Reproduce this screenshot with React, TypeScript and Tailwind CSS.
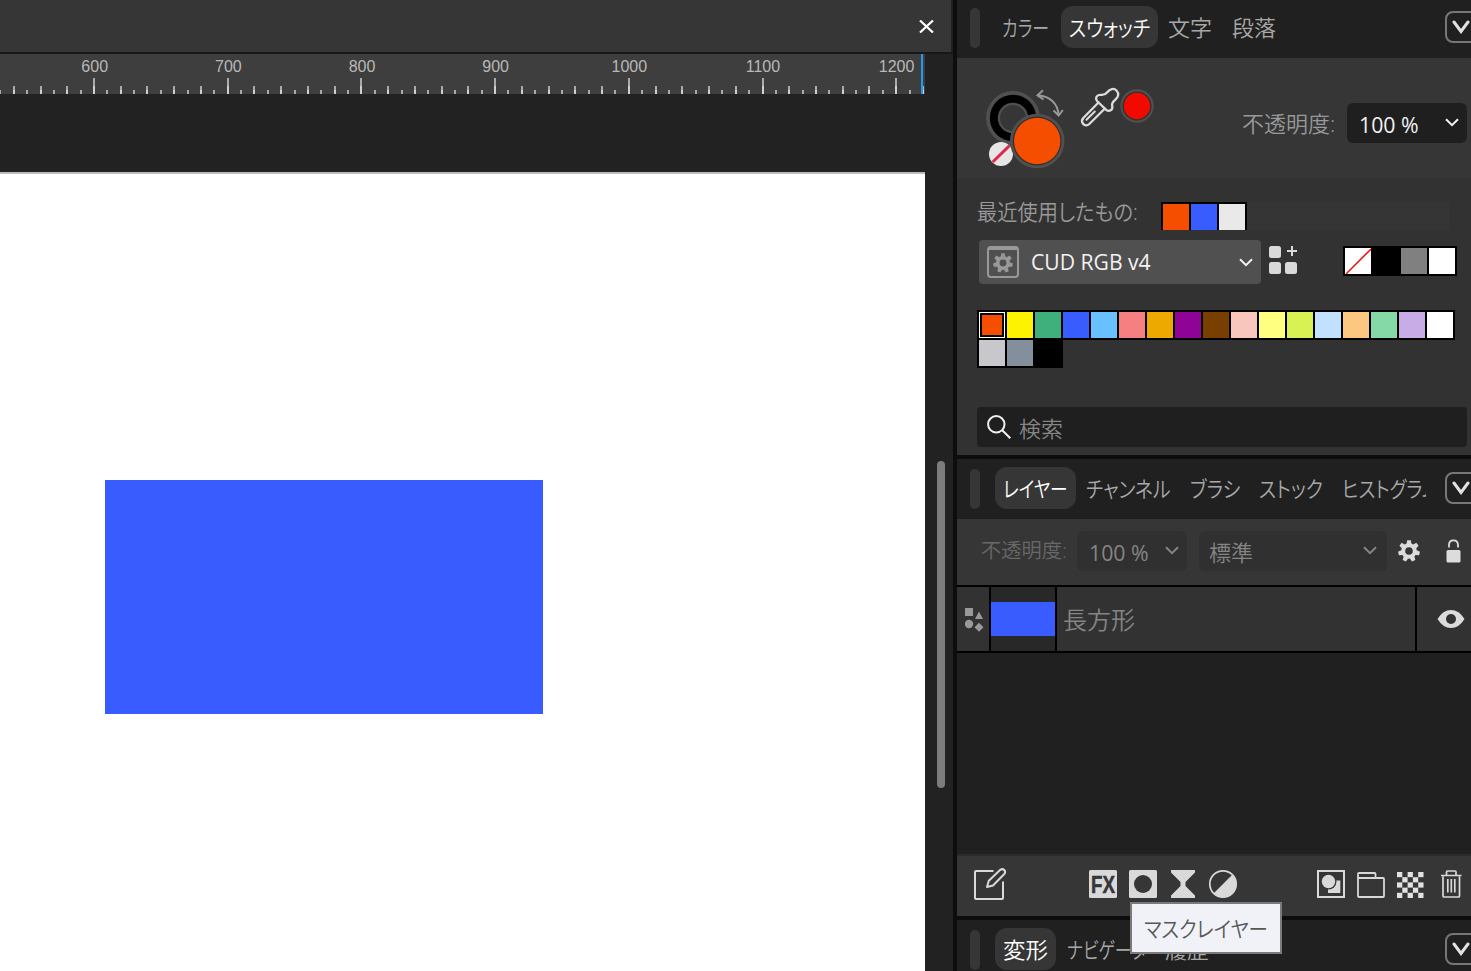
import { useLayoutEffect, useRef, useState } from 'react';
import clsx from 'clsx';

const PALETTE = [
  '#f54e00', '#fdf200', '#3faf7c', '#385cff', '#69c0ff', '#f67f81', '#eea900', '#8f0496', '#793f00', '#f9c6bd',
  '#ffff80', '#d9f253', '#c2e1ff', '#fcc780', '#84d9a7', '#c7ace6', '#ffffff', '#c7c7cc', '#848f9e', '#000000',
];

const RULER_START = 94;
const RULER_STEP = 13.37;

// Squeezes one line of text to the width of its box.
const Fit = ({ children, className }: { children: string; className: string }) => {
  const box = useRef<HTMLSpanElement>(null);
  const text = useRef<HTMLSpanElement>(null);
  const [scale, setScale] = useState(1);

  useLayoutEffect(() => {
    if (box.current && text.current) {
      setScale(box.current.clientWidth / text.current.offsetWidth);
    }
  }, [children]);

  return (
    <span ref={box} className={clsx('block shrink-0 whitespace-nowrap', className)}>
      <span ref={text} className="inline-block origin-left" style={{ transform: `scaleX(${scale})` }}>
        {children}
      </span>
    </span>
  );
};

const Chevron = ({ className }: { className?: string }) => (
  <svg width="14" height="9" viewBox="0 0 14 9" fill="none" stroke="currentColor" strokeWidth="2" className={clsx('shrink-0', className)}>
    <path d="M1 1.2 7 7.2 13 1.2" />
  </svg>
);

const Gear = ({ size, className }: { size: number; className?: string }) => (
  <svg width={size} height={size} viewBox="-11 -11 22 22" fill="none" stroke="currentColor" className={clsx('shrink-0', className)}>
    <circle r="5.8" strokeWidth="4" />
    {[0, 1, 2, 3, 4, 5, 6].map((i) => (
      <path key={i} d="M-2.5-7 -1.8-10.8H1.8L2.5-7z" fill="currentColor" stroke="none" transform={`rotate(${(i * 360) / 7})`} />
    ))}
  </svg>
);

const PanelMenu = ({ className }: { className?: string }) => (
  <div className={clsx('ml-auto h-8 w-[26px] shrink-0 overflow-hidden text-[#e2e2e2]', className)}>
    <div className="flex h-8 w-9 items-center rounded-lg border-2 border-[#777] pl-[5px]">
      <svg width="18" height="14" viewBox="0 0 18 14" fill="none" stroke="currentColor" strokeWidth="3" strokeLinecap="round">
        <path d="M2 2 9 11.5 16 2" />
      </svg>
    </div>
  </div>
);

const Grip = () => <div className="mt-0.5 ml-[13px] h-10 w-2.5 shrink-0 rounded-full bg-[#363636]" />;

const Tab = ({ label, width, active, className }: { label: string; width: string; active?: boolean; className?: string }) => (
  <div
    className={clsx(
      'flex h-[42px] shrink-0 items-center rounded-xl px-2 text-[22px] leading-[42px]',
      active ? 'bg-[#363636] text-white' : 'text-[#a8a8a8]',
      className,
    )}
  >
    <Fit className={width}>{label}</Fit>
  </div>
);

const Swatch = ({ color, selected }: { color: string; selected?: boolean }) => (
  <div className="h-[26px] w-[26px]" style={{ backgroundColor: color }}>
    {selected && (
      <div className="h-full w-full border border-white">
        <div className="h-full w-full border-2 border-black" />
      </div>
    )}
  </div>
);

const Ruler = () => {
  const ticks = [];
  for (let i = -7; i <= 62; i++) {
    const x = Math.round(RULER_START + i * RULER_STEP) - 1;
    const h = i % 10 === 0 ? 16 : i % 2 === 0 ? 8 : 4;
    ticks.push(
      <g key={i}>
        <rect x={x} y={40 - h} width="2" height={h} fill="#ababab" />
        {h > 4 && <rect x={x} y={h === 16 ? 32 : 36} width="2" height={h / 2} fill="#cfcfcf" />}
      </g>,
    );
  }
  return (
    <svg width="925" height="40" className="block bg-[#3e3e3e]">
      {ticks}
      <g fill="#b8b8b8" fontFamily="Liberation Sans" fontSize="16" textAnchor="middle">
        {[600, 700, 800, 900, 1000, 1100, 1200].map((n, i) => (
          <text key={n} x={94.7 + i * 133.65} y="17.5">{n}</text>
        ))}
      </g>
      <rect x="921" y="0" width="2" height="40" fill="#1e9bf5" />
    </svg>
  );
};

const ColorWells = () => (
  <svg width="180" height="90" viewBox="980 84 180 90" fill="none" className="shrink-0">
    <circle cx="1013" cy="118" r="27" fill="#505050" />
    <circle cx="1013" cy="118" r="23.2" fill="#000" />
    <circle cx="1013" cy="118" r="15.2" fill="#505050" />
    <circle cx="1013" cy="118" r="13" fill="#363636" />
    <circle cx="1001" cy="154" r="12" fill="#e6e6e6" />
    <path d="M992.7 162 1009.5 145.7" stroke="#e0284c" strokeWidth="3" />
    <circle cx="1037.2" cy="141" r="27.3" fill="#505050" />
    <circle cx="1037.2" cy="141" r="24.4" fill="#2e2e2e" />
    <circle cx="1037.2" cy="141" r="23.2" fill="#f54e00" />
    <g stroke="#999" strokeWidth="2">
      <path d="M1038 95.3C1050 96.5 1058 103.5 1058.5 115" />
      <path d="M1043 90.3 1037.5 95.3 1043.5 99.5M1053.5 110.5 1058.7 115.5 1062.8 110" />
    </g>
    <g stroke="#dcdcdc" strokeWidth="2.3" strokeLinejoin="round" strokeLinecap="round">
      <path d="M1098.5 102.5 1083.3 118C1081.5 120 1081.7 122 1083 123.8 1084.8 125.8 1087.5 125.7 1089.3 124L1104.7 108.7" />
      <path d="M1097 101C1095 98.5 1096.5 94.5 1100.5 94.8 1104 95.3 1105.5 94.5 1107 92.5 1110 88.5 1114 88 1116.5 90.5 1119.3 93.5 1118.5 97.2 1115 100 1112.3 102 1111.5 103.5 1112.3 106.7 1112.8 110 1109.5 111.8 1106.5 110.2z" />
      <path d="M1086.500 119.8 1094.8 111.5" strokeWidth="2" />
    </g>
    <circle cx="1137" cy="106" r="16.7" fill="#505050" />
    <circle cx="1137" cy="106" r="14.5" fill="#303030" />
    <circle cx="1137" cy="106" r="13.2" fill="#f20a00" />
  </svg>
);

const LayerToolbar = () => (
  <svg width="514" height="60" viewBox="957 856 514 60" fill="none" className="block">
    <g stroke="#d9d9d9" strokeWidth="2">
      <path d="M993.5 871H976Q975 871 975 872V898Q975 899 976 899H1002Q1003 899 1003 898V881.5" />
      <path d="M987 887 988.8 880.8 1000.3 869.8Q1002.5 868.3 1004.3 870 1006 872 1004.3 874L993 885.5z" strokeLinejoin="round" />
    </g>
    <rect x="1089" y="870" width="28" height="28" rx="1.5" fill="#d9d9d9" />
    <text x="1091" y="892.5" textLength="24" lengthAdjust="spacingAndGlyphs" fontFamily="Liberation Sans" fontWeight="bold" fontSize="24" fill="#363636" stroke="#363636" strokeWidth=".5">FX</text>
    <rect x="1129" y="870" width="28" height="28" rx="1.5" fill="#d9d9d9" />
    <circle cx="1143" cy="884" r="9" fill="#363636" />
    <path d="M1171 870H1195V872.5L1185.5 882V886L1195 895.5V898H1171V895.5L1180.5 886V882L1171 872.5z" fill="#d9d9d9" />
    <circle cx="1223" cy="884" r="13.2" stroke="#d9d9d9" strokeWidth="1.7" />
    <path d="M1232.5 874.5A13.4 13.4 0 0 1 1213.5 893.5z" fill="#d9d9d9" />
    <rect x="1318" y="871" width="26" height="26" stroke="#d9d9d9" strokeWidth="2" />
    <path d="M1328 885V893H1340.3V880.5H1332z" fill="#d9d9d9" />
    <circle cx="1328.5" cy="881.5" r="8" fill="#363636" />
    <circle cx="1328.5" cy="881.5" r="6.700" fill="#d9d9d9" />
    <path d="M1358 878V873.8Q1358 873 1359 873H1374.5Q1375.5 873 1375.5 874V878M1358 878H1383Q1384 878 1384 879V896Q1384 897 1383 897H1359Q1358 897 1358 896z" stroke="#d9d9d9" strokeWidth="1.8" />
    <g fill="#e2e2e2">
      {[0, 1, 2, 3, 4].map((r) =>
        [0, 1, 2, 3, 4].filter((c) => (r + c) % 2 === 0).map((c) => (
          <rect key={`${r}${c}`} x={1397 + c * 5.3} y={872 + r * 5.2} width="5.3" height="5.2" />
        )),
      )}
    </g>
    <path d="M1441 875.5H1461.5M1446.5 875V872Q1446.5 871 1447.5 871H1455Q1456 871 1456 872V875M1443 876.5V896Q1443 897 1444 897H1458.5Q1459.5 897 1459.5 896V876.5M1447.8 879V892.5M1451.3 879V892.5M1454.8 879V892.5" stroke="#d9d9d9" strokeWidth="1.7" />
  </svg>
);

const Workspace = () => (
  <div className="flex h-full w-[953px] shrink-0 flex-col bg-[#222]">
    <div className="flex h-[54px] shrink-0 border-b-2 border-[#171717] bg-[#1f1f1f]">
      <div className="flex w-[951px] items-center justify-end bg-[#363636] pr-[17px]">
        <svg width="15" height="13" viewBox="0 0 15 13" stroke="#fff" strokeWidth="2.2">
          <path d="M1 .5 14 12.5M14 .5 1 12.5" />
        </svg>
      </div>
    </div>
    <Ruler />
    <div className="flex grow">
      <div className="mt-[78px] w-[925px] border-t-2 border-t-[#bcbcbc] bg-white pt-[306px] pl-[105px]">
        <div className="h-[234px] w-[438px] bg-[#385cff]" />
      </div>
      <div className="mt-[367px] ml-3 h-[327px] w-2 rounded-full bg-[#7c7c7c]" />
    </div>
  </div>
);

const SwatchesPanel = () => (
  <>
    <div className="flex h-[58px] shrink-0 items-center bg-[#202020] pb-1">
      <Grip />
      <Tab label="カラー" width="w-[47px]" className="ml-3.5" />
      <Tab label="スウォッチ" width="w-[81px]" active className="ml-1" />
      <Tab label="文字" width="w-[44px]" className="ml-0.5" />
      <Tab label="段落" width="w-[44px]" className="ml-1" />
      <PanelMenu />
    </div>
    <div className="flex h-[120px] shrink-0 bg-[#363636] pt-[26px] pl-[23px]">
      <ColorWells />
      <div className="mt-[19px] ml-[82px] flex h-10 items-center">
        <Fit className="w-[93px] text-[22px] text-[#999]">不透明度:</Fit>
        <div className="ml-3 flex h-10 w-[120px] items-center justify-between rounded-md bg-[#1f1f1f] pr-2 pl-3 text-[22px] text-[#f2f2f2]">
          <Fit className="mt-0.5 w-[60px] font-normal">100 %</Fit>
          <Chevron className="-mt-0.5" />
        </div>
      </div>
    </div>
    <div className="flex h-[277px] shrink-0 flex-col bg-[#323232] pl-5">
      <div className="mt-6 flex h-7">
        <Fit className="-mt-[7px] w-[161px] text-[22px] leading-8 text-[#999]">最近使用したもの:</Fit>
        <div className="ml-[23px] flex w-[86px] gap-0.5 bg-black px-0.5 pt-0.5">
          <Swatch color="#f54e00" />
          <Swatch color="#385cff" />
          <Swatch color="#e9e9e9" />
        </div>
        <div className="w-[202px] bg-[#353535]" />
      </div>
      <div className="mt-2.5 ml-0.5 flex h-11 items-center">
        <div className="flex h-11 w-[282px] items-center rounded bg-[#505050] pl-2 text-[22px] text-[#f2f2f2]">
          <div className="flex h-8 w-8 items-center justify-center rounded-sm border-2 border-t-4 border-[#999] text-[#999]">
            <Gear size={20} />
          </div>
          <Fit className="-mt-0.5 ml-3 w-[120px] font-normal">CUD RGB v4</Fit>
          <Chevron className="ml-[88px]" />
        </div>
        <svg width="28" height="28" fill="#d9d9d9" className="-mt-1 ml-2">
          <rect width="12" height="12" rx="2.5" />
          <rect y="16" width="12" height="12" rx="2.5" />
          <rect x="16" y="16" width="12" height="12" rx="2.5" />
          <path d="M22 0h2v4h4v2h-4v4h-2V6h-4V4h4z" />
        </svg>
        <div className="-mt-0.5 ml-[46px] flex h-[30px] gap-0.5 bg-black p-0.5">
          <svg width="26" height="26" className="bg-white">
            <path d="M1 26 26 1" stroke="#f01818" strokeWidth="1.6" />
          </svg>
          <Swatch color="#000000" />
          <Swatch color="#808080" />
          <Swatch color="#ffffff" />
        </div>
      </div>
      <div className="mt-[26px] flex h-[58px] w-[478px] flex-wrap">
        {PALETTE.map((color, i) => (
          <div key={color} className={clsx('h-[30px] w-[30px] bg-black p-0.5', i % 17 !== 0 && '-ml-0.5', i >= 17 && '-mt-0.5')}>
            <Swatch color={color} selected={i === 0} />
          </div>
        ))}
      </div>
      <div className="mt-[39px] flex h-10 w-[490px] items-center rounded bg-[#1f1f1f] pl-2.5 text-[22px] text-[#858585]">
        <svg width="24" height="24" viewBox="0 0 24 24" fill="none" stroke="#f0f0f0" strokeWidth="2">
          <circle cx="9.3" cy="9.3" r="8.2" />
          <path d="M15 15 23.3 23.3" />
        </svg>
        <Fit className="mt-0.5 ml-2 w-[44px]">検索</Fit>
      </div>
    </div>
  </>
);

const LayersPanel = () => (
  <>
    <div className="flex h-[60px] shrink-0 items-center bg-[#202020] pb-0.5">
      <Grip />
      <Tab label="レイヤー" width="w-[65px]" active className="ml-[15px]" />
      <Tab label="チャンネル" width="w-[85px]" className="ml-[2px]" />
      <Tab label="ブラシ" width="w-[50px]" className="ml-[3px]" />
      <Tab label="ストック" width="w-[64px]" className="ml-[3px]" />
      <div className="ml-[3px] w-[92px] overflow-hidden">
        <Tab label="ヒストグラム" width="w-[97px]" />
      </div>
      <PanelMenu />
    </div>
    <div className="flex h-[68px] shrink-0 items-center border-b-2 border-black bg-[#363636] pb-0.5 pl-6 text-[22px] text-[#858585]">
      <Fit className="w-[86px] text-[20px] text-[#686868]">不透明度:</Fit>
      <div className="ml-2.5 flex h-10 w-[110px] items-center justify-between rounded-md bg-[#303030] pr-2 pl-3">
        <Fit className="mt-0.5 w-[60px] font-normal">100 %</Fit>
        <Chevron className="-mt-px" />
      </div>
      <div className="ml-3 flex h-10 w-[188px] items-center justify-between rounded-md bg-[#303030] pr-2.5 pl-2.5">
        <Fit className="mt-0.5 w-[44px]">標準</Fit>
        <Chevron className="-mt-px" />
      </div>
      <Gear size={22} className="ml-[11px] text-[#dcdcdc]" />
      <svg width="15" height="24" viewBox="0 0 15 24" fill="none" className="ml-[26px] text-[#dcdcdc]">
        <path d="M3 8.5V6Q3 1.3 7.5 1.3 12 1.3 12 6V8.5" stroke="currentColor" strokeWidth="1.8" />
        <rect x=".5" y="11" width="14" height="12.5" rx="1.5" fill="currentColor" />
      </svg>
    </div>
    <div className="flex h-[66px] shrink-0 gap-0.5 border-b-2 border-black bg-black">
      <div className="flex w-8 items-center bg-[#323232] pl-2">
        <svg width="19" height="25" fill="#999">
          <rect y="1" width="8" height="8" />
          <path d="M14 4.5 18 12H10z" />
          <circle cx="4" cy="17" r="4.2" />
          <path d="M14 15.8 18.500 20.3 14 24.8 9.5 20.3z" />
        </svg>
      </div>
      <div className="w-16 bg-[#282828] pt-[15px]">
        <div className="h-[34px] bg-[#385cff]" />
      </div>
      <div className="flex w-[358px] items-center bg-[#323232] pt-px pl-1.5 text-[24px] text-[#858585]">
        <Fit className="w-[72px]">長方形</Fit>
      </div>
      <div className="flex grow items-center justify-end bg-[#323232] pr-1.5">
        <svg width="28" height="20" viewBox="0 0 28 20">
          <path d="M.5 10Q6 1 14 1T27.5 10Q22 19 14 19T.5 10z" fill="#dcdcdc" />
          <circle cx="14" cy="10" r="5" fill="#323232" />
        </svg>
      </div>
    </div>
    <div className="grow bg-[#202020]" />
    <div className="h-[62px] shrink-0 border-t-2 border-[#2b2b2b] bg-[#363636]">
      <LayerToolbar />
    </div>
  </>
);

export default function App() {
  return (
    <div className="relative flex h-[971px] w-[1471px] overflow-hidden bg-[#0d0d0d] font-['Open_Sans','Noto_Sans_CJK_JP',sans-serif] font-[350] [font-feature-settings:'palt']">
      <Workspace />
      <div className="ml-1 flex h-full w-[514px] flex-col">
        <SwatchesPanel />
        <div className="h-1 shrink-0" />
        <LayersPanel />
        <div className="h-1 shrink-0" />
        <div className="flex h-[51px] shrink-0 items-start bg-[#202020] pt-2">
          <div className="flex h-[42px] items-center">
            <Grip />
          </div>
          <Tab label="変形" width="w-[45px]" active className="ml-[15px]" />
          <Tab label="ナビゲータ" width="w-[79px]" className="ml-[3px]" />
          <Tab label="履歴" width="w-[44px]" className="ml-[3px]" />
          <PanelMenu className="mt-[5px]" />
        </div>
      </div>

      {/* ツールチップ */}
      <div className="absolute top-[902px] left-[1130px] flex h-[52px] w-[152px] items-center border-2 border-[#7a7a7a] bg-[#f1f2f8] pl-3 text-[22px] text-[#575757]">
        <Fit className="w-[124px]">マスクレイヤー</Fit>
      </div>
    </div>
  );
}
